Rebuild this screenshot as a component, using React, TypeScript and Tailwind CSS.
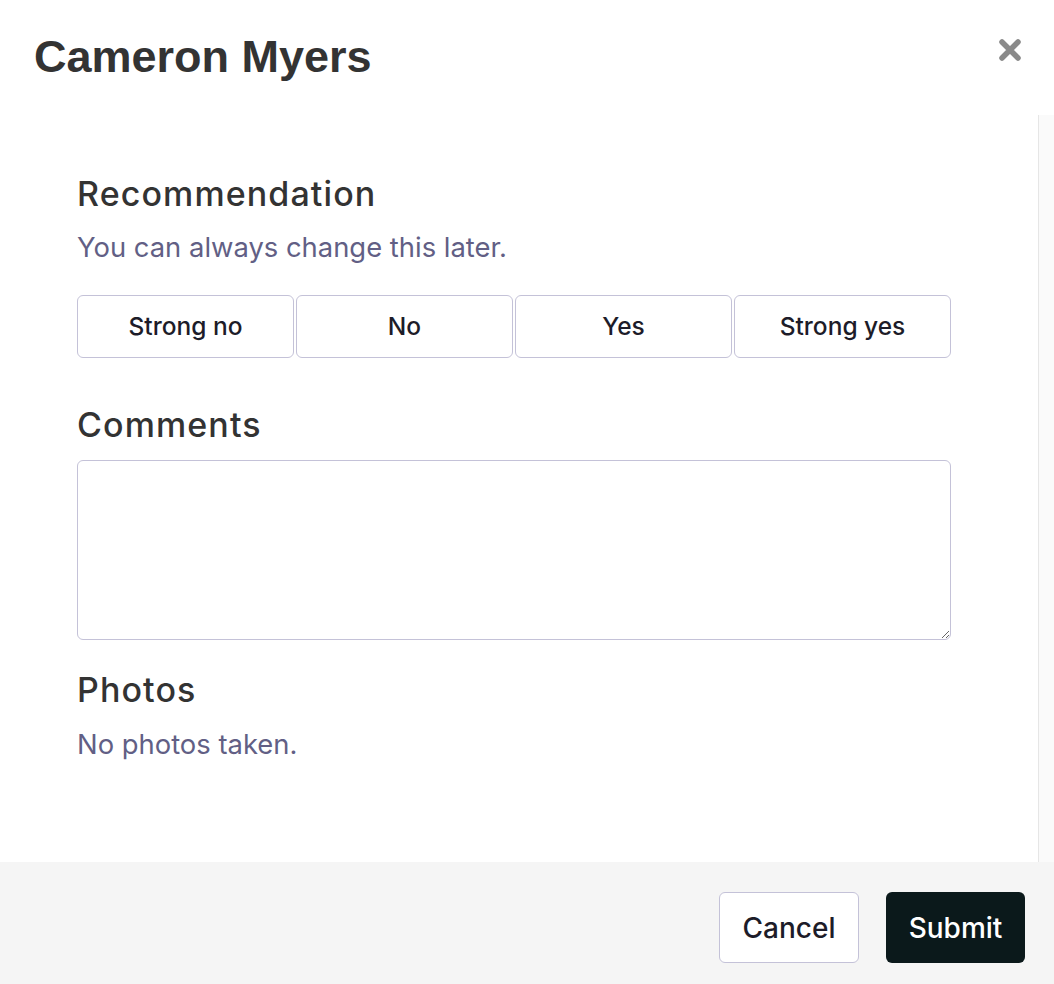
import React from "react";

const inter = { fontFamily: "Inter, 'Noto Sans', sans-serif" };

export default function App() {
  const opts = ["Strong no", "No", "Yes", "Strong yes"];
  return (
    <div
      className="w-[1054px] h-[984px] bg-white flex flex-col overflow-hidden"
      style={inter}
    >
      <header className="h-[115px] shrink-0 flex items-start justify-between pl-[34px] pr-[32px] pt-[31px]">
        <h1 className="text-[45px] leading-[52px] font-bold text-[#333333] font-['Liberation_Sans',Arial,sans-serif]">
          Cameron Myers
        </h1>
        <button className="mt-[7px] w-[24px] h-[24px] flex items-center justify-center">
          <svg width="24" height="24" viewBox="0 0 24 24">
            <path
              d="M4 4 L20 20 M20 4 L4 20"
              stroke="#8a8a8a"
              strokeWidth="5.5"
              strokeLinecap="round"
            />
          </svg>
        </button>
      </header>

      <div className="flex-1 flex min-h-0">
        <div className="flex-1 pl-[77px] pr-[87px] pt-[59px]">
          <h2 className="text-[34px] leading-[40px] font-medium tracking-[1.1px] text-[#333333]">
            Recommendation
          </h2>
          <p className="mt-[17px] text-[27.4px] leading-[32px] text-[#625f85]">
            You can always change this later.
          </p>
          <div className="mt-[32px] grid grid-cols-4 gap-[2px]">
            {opts.map((o) => (
              <button
                key={o}
                className="h-[63px] rounded-[6px] border border-[#c4c2d8] bg-white text-[24.5px] font-medium text-[#1d1c29]"
              >
                {o}
              </button>
            ))}
          </div>
          <h2 className="mt-[47px] text-[34px] leading-[40px] font-medium tracking-[1.1px] text-[#333333]">
            Comments
          </h2>
          <textarea className="mt-[15px] block w-full h-[180px] rounded-[6px] border border-[#c4c2d8] bg-white outline-none" />
          <h2 className="mt-[30px] text-[34px] leading-[40px] font-medium tracking-[1.1px] text-[#333333]">
            Photos
          </h2>
          <p className="mt-[18px] text-[27.4px] leading-[32px] text-[#625f85]">
            No photos taken.
          </p>
        </div>
        <div className="w-[16px] shrink-0 border-l border-[#e6e6e6] bg-[#fafafa]" />
      </div>

      <footer className="h-[122px] shrink-0 bg-[#f5f5f5] flex items-start justify-end gap-[27px] pt-[30px] pr-[29px]">
        <button className="h-[71px] w-[140px] rounded-[6px] border border-[#c4c2d8] bg-white text-[28px] font-medium text-[#1d1c29]">
          Cancel
        </button>
        <button className="h-[71px] w-[139px] rounded-[6px] bg-[#0b191b] text-[28px] font-medium text-white">
          Submit
        </button>
      </footer>
    </div>
  );
}
